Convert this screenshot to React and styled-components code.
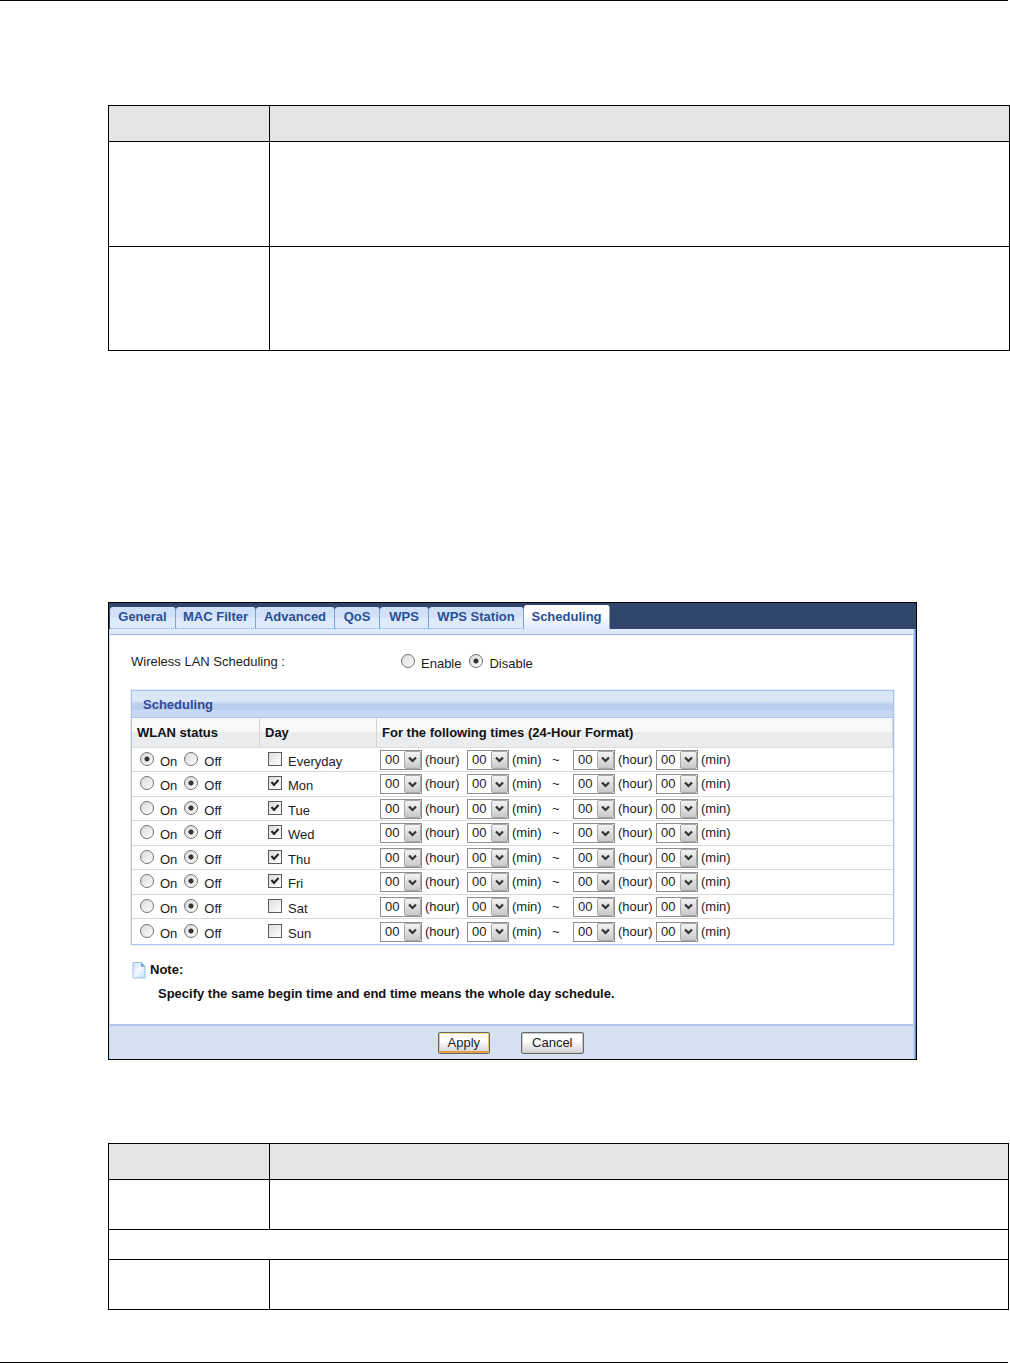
import React, { useState } from 'react';
import { styled, createGlobalStyle } from 'styled-components';

const GlobalStyle = createGlobalStyle`
  *, *::before, *::after {
    box-sizing: border-box;
  }

  body {
    margin: 0;
    background: #fff;
    color: #1c1c1c;
    font-family: 'Liberation Sans', Arial, sans-serif;
    font-size: 13px;
    line-height: 16px;
  }
`;

const Page = styled.main`
  display: flex;
  flex-direction: column;
`;

const Rule = styled.hr`
  width: 100%;
  height: 1px;
  margin: 0;
  border: 0;
  border-right: 2px solid #fff;
  background: #000;
`;

const Content = styled.div`
  display: flex;
  flex-direction: column;
  padding: 104px 0 52px 108px;
`;

const DocTable = styled.table`
  width: ${(p) => (p.$inset ? 'calc(100% - 1px)' : '100%')};
  table-layout: fixed;
  border-spacing: 0;
  border-top: 1px solid #000;
  border-left: 1px solid #000;
`;

const DocCell = styled.td`
  height: ${(p) => p.$height}px;
  padding: 0;
  border-right: 1px solid #000;
  border-bottom: 1px solid #000;
`;

const DocHead = styled.th`
  height: 36px;
  padding: 0;
  background: #e5e5e5;
  border-right: 1px solid #000;
  border-bottom: 1px solid #000;

  &:first-child {
    width: 161px;
  }
`;

const Figure = styled.section`
  margin: 251px 93px 83px 0;
  border: 1px solid #000;
`;

const TabBar = styled.nav`
  display: grid;
  grid-template-columns: 66px 80px 79px 45px 49px 95px 86px;
  align-items: end;
  height: 26px;
  padding-left: 1px;
  background: #30466d;
`;

const Tab = styled.button`
  height: ${(p) => (p.$active ? 24 : 22)}px;
  margin: 0;
  padding: 0 0 ${(p) => (p.$active ? 0 : 2)}px;
  border: 0;
  border-right: 1px solid ${(p) => (p.$active ? '#8c9ab5' : '#7ba3dc')};
  border-bottom: 1px ${(p) => (p.$active ? 'solid #e0ebfc' : 'dotted #8fb3e6')};
  border-radius: 3px 3px 0 0;
  background: ${(p) =>
    p.$active
      ? 'linear-gradient(#fff 0 40%, #e0ebfc)'
      : 'linear-gradient(#cfe0f8 0 45%, #deebfd 55%)'};
  color: #2b4f92;
  font: inherit;
  font-weight: bold;
  white-space: nowrap;
`;

const Frame = styled.div`
  padding: 0 3px 0 1px;
  background: linear-gradient(
    to right,
    #bfd6f7 1px,
    #fff 1px calc(100% - 3px),
    #c5daf8 calc(100% - 3px) calc(100% - 2px),
    #8fb4eb calc(100% - 2px) calc(100% - 1px),
    #6a91d4 calc(100% - 1px)
  );
`;

const Strip = styled.div`
  height: 6px;
  border-bottom: 1px solid #94b7e8;
  background: #deeafc;
`;

const Body = styled.div`
  padding: 16px 19px 21px 21px;
`;

const Setting = styled.fieldset`
  display: grid;
  grid-template-columns: 270px 1fr;
  align-items: center;
  margin: 0 0 18px;
  padding: 0;
  border: 0;
`;

const Options = styled.div`
  display: flex;
  gap: ${(p) => (p.$inset ? 8 : 7)}px;
  padding-top: ${(p) => (p.$inset ? 3 : 2)}px;
`;

const Label = styled.label`
  display: inline-flex;
  align-items: baseline;
  gap: 6px;
`;

const Radio = styled.input.attrs({ type: 'radio' })`
  appearance: none;
  flex: none;
  width: 14px;
  height: 14px;
  margin: 0;
  border: 1px solid #6d7277;
  border-radius: 50%;
  background: linear-gradient(135deg, #d9d9d9, #fff);

  &:checked {
    background:
      radial-gradient(circle, #333 0 2px, transparent 3px),
      linear-gradient(135deg, #d9d9d9, #fff);
  }
`;

const CheckWrap = styled.span`
  display: inline-grid;

  > * {
    grid-area: 1 / 1;
  }

  svg {
    width: 14px;
    height: 14px;
    visibility: hidden;
    pointer-events: none;
  }

  input:checked + svg {
    visibility: visible;
  }
`;

const CheckInput = styled.input.attrs({ type: 'checkbox' })`
  appearance: none;
  width: 14px;
  height: 14px;
  margin: 0;
  border: 1px solid #5c5c5c;
  background: linear-gradient(135deg, #dcdcdc, #fff);
`;

const Panel = styled.div`
  border: 1px solid #a9c5ee;
  box-shadow: 0 0 0 1px #e6effb;
`;

const PanelTitle = styled.h2`
  height: 27px;
  margin: 0;
  padding: 0 11px;
  border-bottom: 1px solid #a6c5f0;
  background: linear-gradient(
    #dae7f6 0 10px,
    #b9cfee 13px 19px,
    #c8daf3 19px
  );
  color: #37489a;
  font-size: 13px;
  line-height: 27px;
`;

const ScheduleTable = styled.table`
  width: 100%;
  table-layout: fixed;
  border-spacing: 0;
`;

const HeadCell = styled.th`
  width: ${(p) => (p.$width ? `${p.$width}px` : 'auto')};
  height: 30px;
  padding: 0 5px;
  border-right: 1px solid #d4d4d4;
  border-bottom: 1px solid #dcdcdc;
  background: linear-gradient(#f9f9f9 0 14px, #ebecee 14px);
  color: #111;
  text-align: left;
`;

const Row = styled.tr`
  height: 24px;

  &:nth-child(even) {
    height: 25px;
  }

  &:last-child td {
    border-bottom: 0;
  }
`;

const Cell = styled.td`
  padding: 0 0 0 ${(p) => p.$pad}px;
  border-bottom: 1px solid #d9d9d9;
`;

const Times = styled.div`
  display: grid;
  grid-template-columns: 45px 42px 45px 40px 21px 45px 38px 45px auto;
  align-items: center;
`;

const SelectWrap = styled.span`
  display: inline-grid;
  width: 42px;

  > * {
    grid-area: 1 / 1;
  }
`;

const Select = styled.select`
  appearance: none;
  width: 100%;
  height: 20px;
  margin: 0;
  padding: 0 0 0 4px;
  border: 1px solid #8f8f8f;
  border-radius: 0;
  background: #fff;
  color: #1c1c1c;
  font: inherit;
`;

const Arrow = styled.span`
  display: grid;
  place-items: center;
  place-self: center end;
  width: 17px;
  height: 18px;
  margin-right: 1px;
  border: 1px solid #a9a9a9;
  border-radius: 2px;
  background: linear-gradient(#f3f3f3, #c9c9c9);
  pointer-events: none;
`;

const Note = styled.div`
  display: flex;
  align-items: center;
  gap: 4px;
  height: 18px;
  margin-top: 16px;
  padding-left: 1px;
  color: #111;
`;

const NoteText = styled.p`
  margin: 6px 0 0;
  padding-left: 27px;
  color: #111;
  font-weight: bold;
  line-height: 18px;
`;

const Footer = styled.div`
  display: flex;
  align-items: center;
  justify-content: center;
  gap: 31px;
  height: 35px;
  padding-right: 2px;
  border-top: 2px solid #adc6e8;
  background: #d5e1f1;
`;

const Button = styled.button`
  height: 22px;
  margin: 0;
  padding: 0 ${(p) => (p.$primary ? 9 : 10)}px;
  border: 1px solid #66686c;
  border-radius: 2px;
  background: linear-gradient(#fefefe 0 40%, #d0d0d2);
  box-shadow: ${(p) =>
    p.$primary
      ? 'inset 0 1px #f6d88c, inset 1px 0 #f0c068, inset -1px 0 #f0c068, inset 0 -2px #e3a04a'
      : 'inset 0 0 0 1px #c8c8ca'};
  color: #222;
  font: inherit;
`;

const tabs = [
  'General',
  'MAC Filter',
  'Advanced',
  'QoS',
  'WPS',
  'WPS Station',
  'Scheduling',
];

const days = [
  { name: 'Everyday', status: 'on', checked: false },
  { name: 'Mon', status: 'off', checked: true },
  { name: 'Tue', status: 'off', checked: true },
  { name: 'Wed', status: 'off', checked: true },
  { name: 'Thu', status: 'off', checked: true },
  { name: 'Fri', status: 'off', checked: true },
  { name: 'Sat', status: 'off', checked: false },
  { name: 'Sun', status: 'off', checked: false },
];

const range = (count, step = 1) =>
  [...Array(count)].map((_, i) => String(i * step).padStart(2, '0'));

const hours = range(24);
const minutes = range(12, 5);

const TimeSelect = ({ label, options }) => (
  <SelectWrap>
    <Select aria-label={label} defaultValue="00">
      {options.map((value) => (
        <option key={value}>{value}</option>
      ))}
    </Select>
    <Arrow>
      <svg width="9" height="7" viewBox="0 0 9 7" aria-hidden="true">
        <path d="M1 1.5 4.5 5 8 1.5" fill="none" stroke="#333" strokeWidth="2.2" />
      </svg>
    </Arrow>
  </SelectWrap>
);

const Checkbox = ({ label, defaultChecked }) => (
  <Label>
    <CheckWrap>
      <CheckInput defaultChecked={defaultChecked} />
      <svg viewBox="0 0 14 14" aria-hidden="true">
        <path d="M3.5 6 6 9 10.5 4" fill="none" stroke="#222" strokeWidth="2" />
      </svg>
    </CheckWrap>
    {label}
  </Label>
);

const NoteIcon = () => (
  <svg width="14" height="18" viewBox="0 0 14 18" aria-hidden="true">
    <defs>
      <linearGradient id="sheet" x1="0" y1="0" x2="1" y2="1">
        <stop offset="0" stopColor="#c6e0f8" />
        <stop offset="0.5" stopColor="#f2f9ff" />
        <stop offset="1" stopColor="#c0dcf6" />
      </linearGradient>
    </defs>
    <path
      d="M1 1.5h8l4 4v11.5H1z"
      fill="url(#sheet)"
      stroke="#9dc2e8"
      strokeLinejoin="round"
    />
    <path d="M9 1.5v4h4z" fill="#6fa5dc" stroke="#83b1e0" strokeWidth="0.6" />
  </svg>
);

const ScheduleRow = ({ day }) => (
  <Row>
    <Cell $pad={8}>
      <Options>
        <Label>
          <Radio name={`status-${day.name}`} defaultChecked={day.status === 'on'} />
          On
        </Label>
        <Label>
          <Radio name={`status-${day.name}`} defaultChecked={day.status === 'off'} />
          Off
        </Label>
      </Options>
    </Cell>
    <Cell $pad={8}>
      <Options>
        <Checkbox label={day.name} defaultChecked={day.checked} />
      </Options>
    </Cell>
    <Cell $pad={3}>
      <Times>
        <TimeSelect label={`${day.name} begin hour`} options={hours} />
        <span>(hour)</span>
        <TimeSelect label={`${day.name} begin minute`} options={minutes} />
        <span>(min)</span>
        <span>~</span>
        <TimeSelect label={`${day.name} end hour`} options={hours} />
        <span>(hour)</span>
        <TimeSelect label={`${day.name} end minute`} options={minutes} />
        <span>(min)</span>
      </Times>
    </Cell>
  </Row>
);

const App = () => {
  const [activeTab, setActiveTab] = useState('Scheduling');

  return (
    <Page>
      <GlobalStyle />
      <Rule />
      <Content>
        <DocTable>
          <thead>
            <tr>
              <DocHead />
              <DocHead />
            </tr>
          </thead>
          <tbody>
            <tr>
              <DocCell $height={105} />
              <DocCell $height={105} />
            </tr>
            <tr>
              <DocCell $height={104} />
              <DocCell $height={104} />
            </tr>
          </tbody>
        </DocTable>

        <Figure>
          <TabBar>
            {tabs.map((tab) => (
              <Tab
                key={tab}
                type="button"
                $active={tab === activeTab}
                onClick={() => setActiveTab(tab)}
              >
                {tab}
              </Tab>
            ))}
          </TabBar>
          <Frame>
            <Strip />
            <Body>
              <Setting aria-labelledby="wlan-scheduling">
                <span id="wlan-scheduling">Wireless LAN Scheduling :</span>
                <Options $inset>
                  <Label>
                    <Radio name="scheduling" />
                    Enable
                  </Label>
                  <Label>
                    <Radio name="scheduling" defaultChecked />
                    Disable
                  </Label>
                </Options>
              </Setting>

              <Panel>
                <PanelTitle>Scheduling</PanelTitle>
                <ScheduleTable>
                  <thead>
                    <tr>
                      <HeadCell $width={128}>WLAN status</HeadCell>
                      <HeadCell $width={117}>Day</HeadCell>
                      <HeadCell>For the following times (24-Hour Format)</HeadCell>
                    </tr>
                  </thead>
                  <tbody>
                    {days.map((day) => (
                      <ScheduleRow key={day.name} day={day} />
                    ))}
                  </tbody>
                </ScheduleTable>
              </Panel>

              <Note>
                <NoteIcon />
                <strong>Note:</strong>
              </Note>
              <NoteText>
                Specify the same begin time and end time means the whole day schedule.
              </NoteText>
            </Body>
            <Footer>
              <Button type="submit" $primary>
                Apply
              </Button>
              <Button type="button">Cancel</Button>
            </Footer>
          </Frame>
        </Figure>

        <DocTable $inset>
          <thead>
            <tr>
              <DocHead />
              <DocHead />
            </tr>
          </thead>
          <tbody>
            <tr>
              <DocCell $height={50} />
              <DocCell $height={50} />
            </tr>
            <tr>
              <DocCell $height={30} colSpan={2} />
            </tr>
            <tr>
              <DocCell $height={50} />
              <DocCell $height={50} />
            </tr>
          </tbody>
        </DocTable>
      </Content>
      <Rule />
    </Page>
  );
};

export default App;
